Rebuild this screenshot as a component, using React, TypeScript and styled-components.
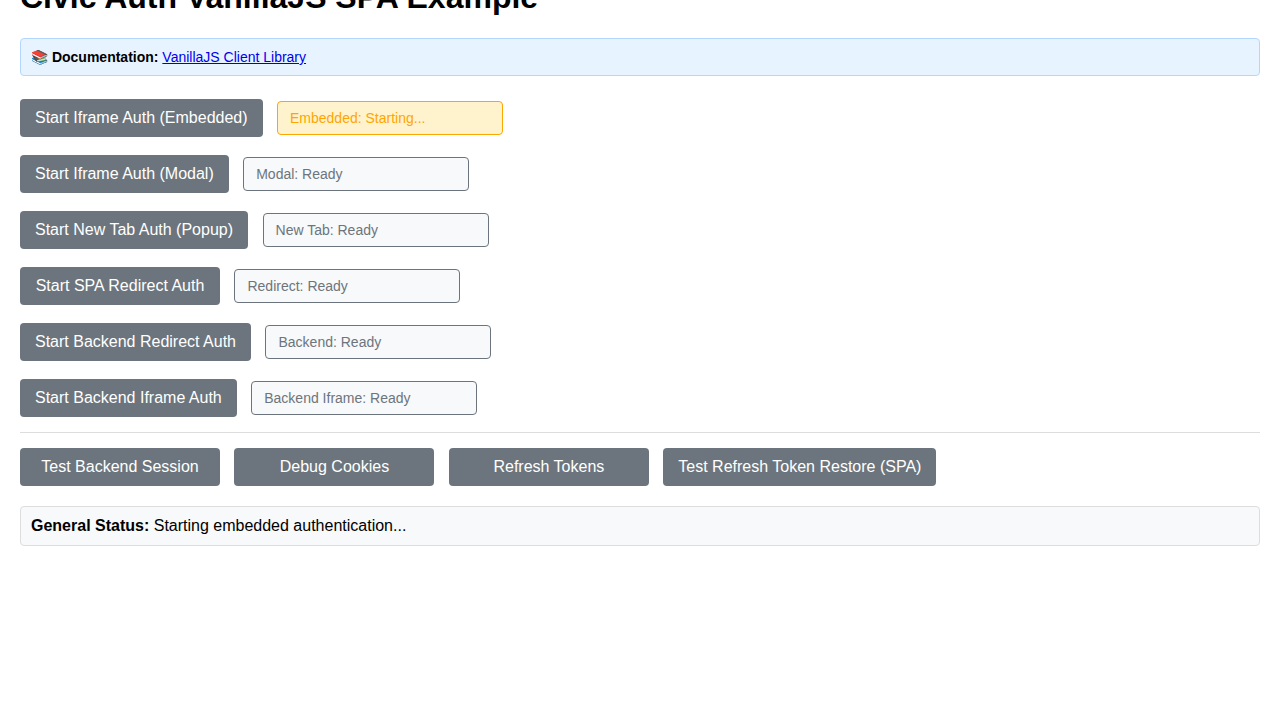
import React from "react";
import styled, { createGlobalStyle } from "styled-components";

const GlobalStyle = createGlobalStyle`
  html, body { margin: 0; padding: 0; background: #fff; }
  body { height: 720px; overflow: hidden; font-family: Arial, "Liberation Sans", sans-serif; color: #000; }
`;

const Page = styled.main`
  display: flex;
  flex-direction: column;
  padding: 0 20px;
`;

const Title = styled.h1`
  margin: -21px 0 23px;
  font-size: 32px;
  line-height: 36px;
  font-weight: bold;
`;

const DocBox = styled.div`
  box-sizing: border-box;
  height: 38px;
  padding: 10px;
  border: 1px solid #b3d7ff;
  border-radius: 4px;
  background: #e7f3ff;
  font-size: 14px;
  line-height: 16px;
`;

const DocLink = styled.a`
  color: #0000ee;
`;

const AuthList = styled.div`
  display: flex;
  flex-direction: column;
  gap: 18px;
  margin-top: 23px;
`;

const Row = styled.div`
  display: flex;
  align-items: center;
  gap: 14.47px;
`;

const Button = styled.button`
  box-sizing: border-box;
  min-width: 200px;
  height: 38px;
  padding: 10px 15px;
  border: none;
  border-radius: 4px;
  background: #6c757d;
  color: #fff;
  font-family: inherit;
  font-size: 16px;
  line-height: 18px;
  white-space: nowrap;
  cursor: pointer;
`;

const Status = styled.div<{ $pending?: boolean }>`
  box-sizing: border-box;
  width: 226px;
  height: 34px;
  padding: 8px 12px;
  border: 1px solid ${(p) => (p.$pending ? "#ffa500" : "#6c757d")};
  border-radius: 4px;
  background: ${(p) => (p.$pending ? "#fff3cd" : "#f8f9fa")};
  color: ${(p) => (p.$pending ? "#ffa500" : "#6c757d")};
  font-size: 14px;
  line-height: 16px;
`;

const Actions = styled(Row)`
  gap: 14.45px;
  margin-top: 15px;
  padding-top: 15px;
  border-top: 1px solid #ddd;
`;

const GeneralStatus = styled.div`
  box-sizing: border-box;
  height: 40px;
  margin-top: 20px;
  padding: 10px;
  border: 1px solid #ddd;
  border-radius: 4px;
  background: #f8f9fa;
  font-size: 16px;
  line-height: 18px;
`;

const flows = [
  { label: "Start Iframe Auth (Embedded)", status: "Embedded: Starting...", pending: true },
  { label: "Start Iframe Auth (Modal)", status: "Modal: Ready" },
  { label: "Start New Tab Auth (Popup)", status: "New Tab: Ready" },
  { label: "Start SPA Redirect Auth", status: "Redirect: Ready" },
  { label: "Start Backend Redirect Auth", status: "Backend: Ready" },
  { label: "Start Backend Iframe Auth", status: "Backend Iframe: Ready" },
];

const actions = [
  "Test Backend Session",
  "Debug Cookies",
  "Refresh Tokens",
  "Test Refresh Token Restore (SPA)",
];

export default function App() {
  return (
    <>
      <GlobalStyle />
      <Page>
        <Title>Civic Auth VanillaJS SPA Example</Title>
        <DocBox>
          📚 <strong>Documentation:</strong> <DocLink href="#">VanillaJS Client Library</DocLink>
        </DocBox>
        <AuthList>
          {flows.map((flow) => (
            <Row key={flow.label}>
              <Button>{flow.label}</Button>
              <Status $pending={flow.pending}>{flow.status}</Status>
            </Row>
          ))}
        </AuthList>
        <Actions>
          {actions.map((label) => (
            <Button key={label}>{label}</Button>
          ))}
        </Actions>
        <GeneralStatus>
          <strong>General Status:</strong> Starting embedded authentication...
        </GeneralStatus>
      </Page>
    </>
  );
}
